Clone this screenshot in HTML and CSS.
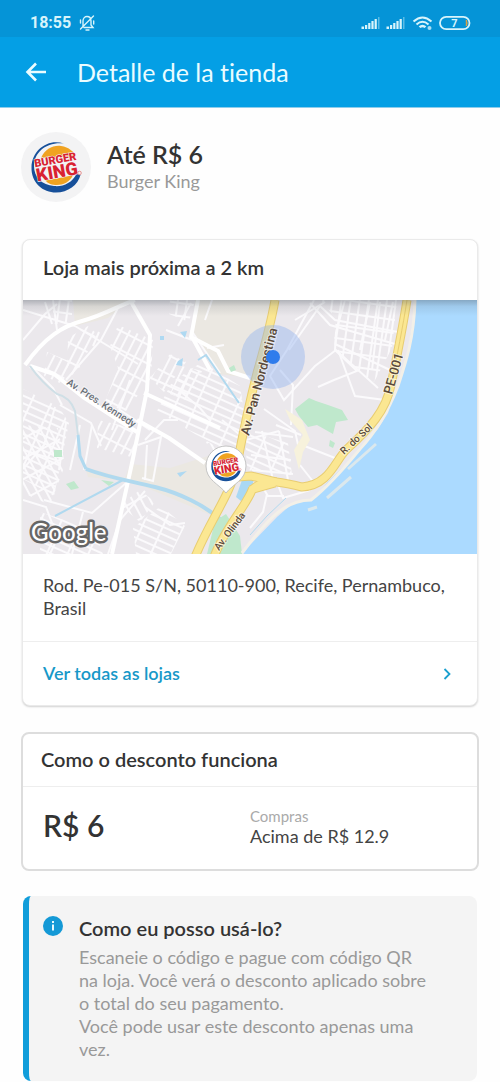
FILE: index.html
```html
<!DOCTYPE html>
<html lang="pt-BR">
<head>
<meta charset="utf-8">
<meta name="viewport" content="width=device-width, initial-scale=1">
<title>Detalle de la tienda</title>
<link rel="stylesheet" href="styles.css">
</head>
<body>
<header class="top">
  <div class="status">
    <span class="clock">18:55</span>
    <svg class="mute" viewBox="0 0 18 18" width="18" height="18" aria-hidden="true" fill="none" stroke="#d8f4fb" stroke-width="1.4" stroke-linecap="round">
      <path d="M5 12V7c0-3 2-4.500 4-4.500S13 4 13 7v4l2 2.500H6M8 16h3M15.500 2 2.500 15M2.500 6v3M15.700 7v3"/>
    </svg>
    <svg class="signals" viewBox="0 0 112 18" width="112" height="18" aria-hidden="true">
      <g id="bars" fill="#d8f4fb">
        <path d="M1.500 12.500h2.500V15H1.500zM5 11h2.200v4H5zM8.200 9h2.200v6H8.200zM11.400 7h2.200v8h-2.200z"/>
        <path d="M14.600 5h2.200v10h-2.200z"/>
        <path d="M18 3h1.500v12H18z" opacity=".4"/>
      </g>
      <use href="#bars" x="25"/>
      <g fill="none" stroke="#d8f4fb" stroke-width="2">
        <path d="M53.500 7.500q9-8 18 0M56.500 10.500q6-5.500 12 0"/>
        <path d="M59.500 13.200q3-2.600 6 0" stroke-width="2.400"/>
      </g>
      <circle cx="69.500" cy="14" r="2" fill="#a8dff5"/>
      <rect x="80" y="2.800" width="29.500" height="12.400" rx="6.200" fill="none" stroke="#d8f4fb" stroke-width="1.800"/>
      <path d="M106.300 6q1.700 3 0 6z" fill="#f0a030" stroke="#e0a040"/>
      <text x="94.500" y="13" text-anchor="middle" class="battery">7</text>
    </svg>
  </div>
  <div class="bar">
    <button class="back" type="button" aria-label="Voltar">
      <svg viewBox="0 0 22 20" width="22" height="20" fill="none" stroke="#eafcff" stroke-width="2.600"><path d="M21 10H2.500M11 1.500 2.500 10l8.500 8.500"/></svg>
    </button>
    <h1>Detalle de la tienda</h1>
  </div>
</header>
<main class="page">
  <section class="store">
    <svg class="avatar" viewBox="0 0 70 70" width="70" height="70" role="img" aria-label="Burger King">
      <circle cx="35" cy="35" r="35" fill="#f3f3f4"/>
      <g id="bk">
        <path d="M43 11.500C27 6 11 18 10.500 35 10 51 22 60.500 35 60.500 47 60.500 57 53 59.500 43l-4-1C51 51 42 55 33 54 21 53 13 45 13 34 13 20 26 9.500 43 11.500z" fill="#17509a"/>
        <path d="M20 26C24 17 32 13 40 14c8 1 13 6 14 10z" fill="#f0a321"/>
        <path d="M24 48c8-1 21-3 28-5-3 7-10 10-16 10-5 0-9-1-12-5z" fill="#f0a321"/>
        <g transform="rotate(-10 35 35)" class="bk-text" text-anchor="middle">
          <text x="35.500" y="31.500" font-size="11">BURGER</text>
          <text x="35" y="46" font-size="18">KING</text>
        </g>
        <circle cx="58.500" cy="41" r="1.800" fill="none" stroke="#e27a78" stroke-width=".8"/>
      </g>
    </svg>
    <div>
      <h2 class="offer">Até R$ 6</h2>
      <p class="brand">Burger King</p>
    </div>
  </section>

  <section class="card">
    <h2 class="card-title">Loja mais próxima a 2 km</h2>
    <svg class="map" viewBox="23 300 454 254" role="img" aria-label="Mapa da loja mais próxima">
      <defs>
        <pattern id="g1" width="8" height="17" patternUnits="userSpaceOnUse" patternTransform="rotate(27)"><path d="M0 2H8M2 0V17" class="lane"/></pattern>
        <pattern id="g2" width="19" height="7" patternUnits="userSpaceOnUse" patternTransform="rotate(24)"><path d="M0 2H19M2 0V7" class="lane"/></pattern>
        <pattern id="g3" width="9" height="13" patternUnits="userSpaceOnUse" patternTransform="rotate(8)"><path d="M0 2H9M2 0V13" class="lane"/></pattern>
        <pattern id="g4" width="8" height="18" patternUnits="userSpaceOnUse" patternTransform="rotate(-28)"><path d="M0 2H8M2 0V18" class="lane"/></pattern>
        <linearGradient id="shade" x1="0" y1="0" x2="0" y2="1"><stop offset="0" stop-color="#46505a" stop-opacity=".36"/><stop offset=".4" stop-color="#46505a" stop-opacity=".12"/><stop offset="1" stop-color="#46505a" stop-opacity="0"/></linearGradient>
      </defs>
      <path d="M23 300h454v254H23z" fill="#ebe8ec"/>
      <g fill="#ebe8e2">
        <path d="M73 300h57l-22 18-33 8zM195 300h79l-24 78-30-4-26-41z"/>
        <path d="M85 467 125 478l5-14 40 4 38-12 21 30-16 30-80-34-45-5z"/>
      </g>
      <g fill="url(#g1)">
        <path d="M118 325l35 15-2 38-25 33-22-7 14-36-8-22zM47 352l24 10-9 22-18-8z"/>
        <path d="M68 338l20-12 9 8-22 42-8-4zM98 420l35 8 2 30-38-10z"/>
        <path d="M150 378l20-24 16 8-22 30zM182 366l20 5-14 30-18-7z"/>
      </g>
      <g fill="url(#g2)">
        <path d="M172 382l30-20 38 24 5 32-7 38-43-22-38-23z"/>
        <path d="M23 389l36 18 10 16-15 73-31-17z"/>
        <path d="M133 528l28-22 24 20-14 28h-35zM40 554v-42l55 18 8 24z"/>
        <path d="M245 430l43 13 4 32-45-5z"/>
      </g>
      <g fill="url(#g3)">
        <path d="M345 300h52l-5 48-18 34-26-18-14-20 2-28zM320 300h30l-7 26z"/>
        <path d="M170 300h25l-6 22-20-8zM52 300h20v24H54z"/>
      </g>
      <path d="M23 425l35 3 7 37-15 40-27-12zM205 440l25 14-15 6zM120 505l20-15 15 12-15 20z" fill="url(#g4)"/>
      <g class="street">
        <path d="M23 340 45 314 57 304M45 302 52 324M23 310 75 326M66 380 101 340 118 308M75 326 138 364M53 300 57 330M99 332 93 346"/>
        <path d="M33 368 53 388 62 405M60 405 91 423 101 446M55 407 44 445 23 469M66 423 59 470M23 450 56 460M80 425 70 470"/>
        <path d="M23 500 46 507 52 523M92 425 84 470M120 410 150 430M151 378 187 394M130 380 112 430M205 320 212 300M178 326 191 303"/>
        <path d="M191 330 220 373M166 330 192 340M207 348 224 345M180 391 200 408 210 420M222 420 245 439"/>
        <path d="M145 491 120 520 108 554M126 483 92 513 44 500M138 445 161 437 153 481 142 478M147 445 145 480"/>
        <path d="M145 440 164 420 178 420M145 507 170 525 185 523M83 512 72 554M97 537 62 528 50 554"/>
        <path d="M314 300 287 350 270 376 284 400 315 366 336 350 378 388M289 350 320 306 335 320 398 332M310 303 330 325 395 344"/>
        <path d="M336 332 335 350 357 371 334 380 318 387M345 300 336 332M370 302 360 350M380 302 372 370M393 302 385 340M335 344 390 370"/>
        <path d="M264 409 295 431 300 454M280 370 293 385 291 425M251 455 291 460M252 470 293 474M255 432 293 437M279 431 288 480M262 431 273 480M300 465 315 484M302 445 335 458M301 435 276 425"/>
        <path d="M277 482 283 498 310 490M260 483 268 496 284 496M250 528 263 512 267 494M246 440 279 431M338 350 355 396 385 400M295 320 325 302"/>
      </g>
      <g class="main">
        <path d="M25 365C45 337 63 326 82 321 104 315 120 305 135 300M130 300 150 335 147 390 132 463 112 554M198 300 191 337 218 351 228 371 250 378"/>
        <path d="M30 366 54 374 83 397 137 432M137 420 169 438 205 463M144 393 220 428M191 335 210 370"/>
      </g>
      <path d="M30 366q12 17 27 28 13 3 18 17l3 24" fill="none" stroke="#cfdfe6" stroke-width="2"/>
      <path d="M78 435 80 456 86 469" class="water" stroke-width="3"/>
      <path d="M86 469C110 478 131 481 155 487 179 493 205 505 222 521" class="water" stroke-width="4"/>
      <path d="M198 360l8-5 33 48M123 480 55 516" class="water" stroke-width="2"/>
      <path d="M236 497 242 480 254 475 252 491 241 501z" fill="#a9d8f4"/>
      <path d="M180 332l7-1-2 7zM178 361l5-3-1 8-6-1zM177 473l10-2-7 6zM160 336h4v4h-4z" fill="#afd9f2"/>
      <g fill="#bfe8cc">
        <path d="M295 409 309 398 316 401 328 405 342 410 348 420 336 422 333 434 317 425 308 427 299 416z"/>
        <path d="M54 450h8v7h-8zM66 484l8-3 5 7-8 2zM101 480l13 2-5 4zM229 368l5-3 2 5-5 2zM330 440l5 3-2 5-4-2z"/>
        <path d="M215 521 226 514 240 536 242 554h-35z"/>
      </g>
      <path d="M285 409 302 420 310 440 303 452 299 470 294 450 303 435 290 420z" fill="#f7f2dc"/>
      <path d="M415 300 413 320 407 357 400 377 392 400 388 413 378 429 360 447 347 463 327 483 312 500 293 503 277 517 250 545 243 554H477V300z" fill="#abdaff"/>
      <path d="M415 300C414 338 406 362 398 386 388 412 376 432 360 449 337 477 325 489 311 500 286 500 270 516 242 553" fill="none" stroke="#f3f0e8" stroke-width="3"/>
      <path d="M250 535 267 516 286 498" class="water" stroke-width="1"/>
      <path d="M348 469 376 444M327 498 351 477M308 510 317 507" fill="none" stroke="#dbe8ed" stroke-width="3"/>
      <g class="road-edge">
        <path d="M275 300C271 324 265 345 257 373 247 412 242 438 237 465 231 494 210 520 195 557"/>
        <path d="M407 300C403 326 397 356 391 385 386 411 369 429 347 449 335 460 330 485 302 487 284 483 265 476 252 490 246 506 223 531 214 557"/>
        <path d="M238 477 251 476 276 482M250 490 275 483"/>
      </g>
      <g class="road">
        <path d="M275 300C271 324 265 345 257 373 247 412 242 438 237 465 231 494 210 520 195 557"/>
        <path d="M407 300C403 326 397 356 391 385 386 411 369 429 347 449 335 460 330 485 302 487 284 483 265 476 252 490 246 506 223 531 214 557"/>
        <path d="M238 477 251 476 276 482M250 490 275 483"/>
      </g>
      <path d="M407 300C403 326 397 356 391 385" fill="none" stroke="#e8cd72" stroke-width="1"/>
      <circle cx="273" cy="357" r="32" fill="#8fb0ee" fill-opacity=".42"/>
      <g class="label">
        <text transform="translate(66 384) rotate(33)" font-size="10" fill="#6a7078">Av. Pres. Kennedy</text>
        <text transform="translate(249 436) rotate(-75)" font-size="13">Av. Pan Nordestina</text>
        <text transform="translate(392 395) rotate(-74)" font-size="13">PE-001</text>
        <text transform="translate(344 455) rotate(-43)" font-size="10">R. do Sol</text>
        <text transform="translate(219 551) rotate(-53)" font-size="10">Av. Olinda</text>
      </g>
      <circle cx="273" cy="357" r="7" fill="#2f7cec"/>
      <path d="M226 493C219 484 206 480 206 466a20 20 0 0 1 40 0C246 480 233 484 226 493z" fill="#fff" stroke="#c4c4c4" stroke-width="1"/>
      <use href="#bk" transform="translate(205 445) scale(.6)"/>
      <text x="31" y="541" class="google">Google</text>
      <path d="M23 300h454v16H23z" fill="url(#shade)"/>
    </svg>
    <p class="address">Rod. Pe-015 S/N, 50110-900, Recife, Pernambuco, Brasil</p>
    <a class="all" href="#lojas">Ver todas as lojas
      <svg viewBox="0 0 8 12" width="8" height="12" fill="none" stroke="#1ba0cf" stroke-width="1.800" aria-hidden="true"><path d="M1.500 1 6.500 6l-5 5"/></svg>
    </a>
  </section>

  <section class="discount">
    <h2 class="discount-title">Como o desconto funciona</h2>
    <div class="terms">
      <strong class="amount">R$ 6</strong>
      <dl class="minimum">
        <dt>Compras</dt>
        <dd>Acima de R$ 12.9</dd>
      </dl>
    </div>
  </section>

  <section class="info">
    <svg class="info-icon" viewBox="0 0 20 20" width="20" height="20" aria-hidden="true"><circle cx="10" cy="10" r="10" fill="#1499d6"/><path d="M10 5v2M10 8.500v6" stroke="#e8f9ff" stroke-width="2"/></svg>
    <div>
      <h2 class="info-title">Como eu posso usá-lo?</h2>
      <p>Escaneie o código e pague com código QR na loja. Você verá o desconto aplicado sobre o total do seu pagamento.</p>
      <p>Você pode usar este desconto apenas uma vez.</p>
    </div>
  </section>
</main>
</body>
</html>
```
FILE: styles.css
```css
* { box-sizing: border-box; }
body { margin: 0; background: #fefefe; color: #333; font: 18px/23px Lato, "Open Sans", sans-serif; font-variant-ligatures: none; }
h1, h2, p, dl, dd { margin: 0; }

.top { background: #049fe5; color: #eafcff; border-bottom: 1px solid #8fcdeb; }
.status { display: flex; align-items: center; height: 37px; padding: 8px 28px 0 30px; background: #0594d7; }
.clock { font: 700 16px/20px Roboto, sans-serif; color: #d8f4fb; }
.mute { margin-left: 7px; }
.signals { margin-left: auto; }
.battery { font: 700 11px Roboto, sans-serif; fill: #d8f4fb; }
.bar { display: flex; align-items: center; gap: 30px; height: 70px; padding: 0 25px; }
.back { display: flex; padding: 0; border: 0; background: none; }
h1 { font-size: 25px; line-height: 30px; font-weight: 400; }

.page { padding: 24px 21px 0; }
.store { display: flex; align-items: center; gap: 16px; }
.offer { font-size: 25px; line-height: 28px; font-weight: 600; }
.brand { color: #999; line-height: 26px; }
.bk-text { font-family: Roboto, sans-serif; font-weight: 900; fill: #d92231; stroke: #f3f3f4; stroke-width: 1; paint-order: stroke; }

.card { margin: 37px 1px 0; border: 1px solid #eaeaea; border-radius: 8px; box-shadow: 0 1px 2px #0000002e; background: #fff; }
.card-title { padding: 15px 20px 21px; font-size: 20px; line-height: 24px; font-weight: 600; }
.map { display: block; width: 100%; height: auto; }
.lane { fill: none; stroke: #fbfafc; stroke-width: 2; }
.street { fill: none; stroke: #fbfafc; stroke-width: 2; }
.main { fill: none; stroke: #fff; stroke-width: 4; stroke-linejoin: round; }
.water { fill: none; stroke: #b0d9ef; }
.road-edge { fill: none; stroke: #e8cd72; stroke-width: 9; }
.road { fill: none; stroke: #fbe792; stroke-width: 7; }
.label { font-family: Roboto, sans-serif; font-weight: 500; fill: #5b4b3c; stroke: #fff8; stroke-width: 2; paint-order: stroke; }
.google { font: 500 24px Lato, sans-serif; fill: #fff; stroke: #666; stroke-width: 5; stroke-linejoin: round; paint-order: stroke; }
.address { padding: 20px 20px 21px; border-bottom: 1px solid #eee; color: #444; }
.all { display: flex; align-items: center; justify-content: space-between; padding: 20px 26px 20px 20px; color: #1798c8; font-weight: 600; text-decoration: none; }

.discount { margin-top: 26px; border: 2px solid #ddd; border-radius: 8px; background: #fff; }
.discount-title { padding: 13px 18px 15px; border-bottom: 1px solid #eee; font-size: 20px; line-height: 24px; font-weight: 600; }
.terms { display: grid; grid-template-columns: 1fr 1fr; align-items: start; padding: 20px 20px 21px; }
.amount { font-size: 30px; line-height: 36px; font-weight: 600; }
.minimum dt { color: #aaa; font-size: 15px; line-height: 18px; }
.minimum dd { color: #444; }

.info { display: flex; gap: 16px; margin: 25px 2px 0; padding: 20px 44px 20px 14px; border-left: 6px solid #119dda; border-radius: 8px; background: #f4f4f4; color: #999; }
.info-icon { flex: none; }
.info-title { color: #333; font-size: 20px; line-height: 24px; font-weight: 600; margin-bottom: 6px; }
```
